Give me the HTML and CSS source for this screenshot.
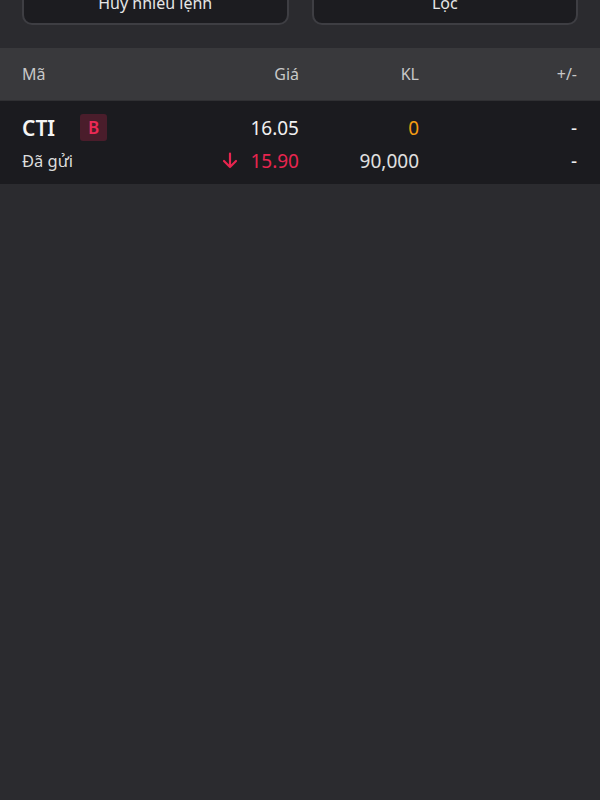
FILE: index.html
```html
<!DOCTYPE html>
<html lang="vi">
<head>
    <meta charset="UTF-8">
    <meta name="viewport" content="width=device-width, initial-scale=1.0">
    <title>Sổ lệnh</title>
    <link rel="stylesheet" href="styles.css">
</head>
<body>
    <div class="toolbar">
        <button class="btn-action">Hủy nhiều lệnh</button>
        <button class="btn-action">Lọc</button>
    </div>

    <div class="order-table">
        <div class="table-head">
            <div class="col col-left">Mã</div>
            <div class="col">Giá</div>
            <div class="col">KL</div>
            <div class="col">+/-</div>
        </div>

        <div class="order-row">
            <div class="col col-left">
                <span class="symbol">CTI</span>
                <span class="side-badge">B</span>
            </div>
            <div class="col price">16.05</div>
            <div class="col qty-match">0</div>
            <div class="col">-</div>

            <div class="col col-left status">Đã gửi</div>
            <div class="col price-order">
                <svg class="arrow-down" width="16" height="17" viewBox="0 0 16 17">
                    <path d="M8 1.5 V15 M2 9 L8 15 L14 9" fill="none" stroke="#e8254f" stroke-width="2.2" stroke-linecap="round" stroke-linejoin="round"/>
                </svg>
                <span>15.90</span>
            </div>
            <div class="col qty">90,000</div>
            <div class="col">-</div>
        </div>
    </div>
</body>
</html>
```

FILE: styles.css
```css
* {
    margin: 0;
    padding: 0;
    box-sizing: border-box;
}

body {
    font-family: 'Noto Sans', 'Open Sans', sans-serif;
    background: #2b2b2f;
    color: #eeeeee;
    min-height: 100vh;
    overflow: hidden;
}

.toolbar {
    display: flex;
    gap: 23px;
    padding: 0 22px 23px;
    margin-top: -20px;
}

.btn-action {
    flex: 1;
    height: 45px;
    background: #1c1c20;
    border: 2px solid #3e3e43;
    border-radius: 10px;
    color: #e6e6e6;
    font-family: inherit;
    font-size: 16px;
}

.table-head,
.order-row {
    display: grid;
    grid-template-columns: 1fr 100px 120px 158px;
    padding: 0 23px 0 22px;
}

.table-head {
    height: 53px;
    align-items: center;
    background: #39393c;
    border-bottom: 1px solid #303033;
    color: #c8c8c8;
    font-size: 16px;
}

.order-row {
    background: #1b1b1f;
    grid-auto-rows: 33px;
    padding-top: 10px;
    padding-bottom: 7px;
    align-items: center;
    font-size: 19px;
}

.col {
    text-align: right;
}

.col-left {
    text-align: left;
    display: flex;
    align-items: center;
}

.symbol {
    font-size: 21px;
    font-weight: 600;
    color: #f4f4f4;
    width: 58px;
}

.side-badge {
    width: 27px;
    height: 27px;
    display: inline-flex;
    align-items: center;
    justify-content: center;
    background: #4a1d2b;
    border-radius: 3px;
    color: #ec2a55;
    font-size: 17px;
    font-weight: 600;
}

.price {
    color: #f0f0f0;
}

.qty-match {
    color: #f39c12;
}

.status {
    font-size: 16.5px;
    color: #dcdcdc;
}

.price-order {
    color: #e8254f;
    display: flex;
    align-items: center;
    justify-content: flex-end;
    gap: 12px;
}

.arrow-down {
    display: block;
}

.qty {
    color: #e0e0e0;
}
```
